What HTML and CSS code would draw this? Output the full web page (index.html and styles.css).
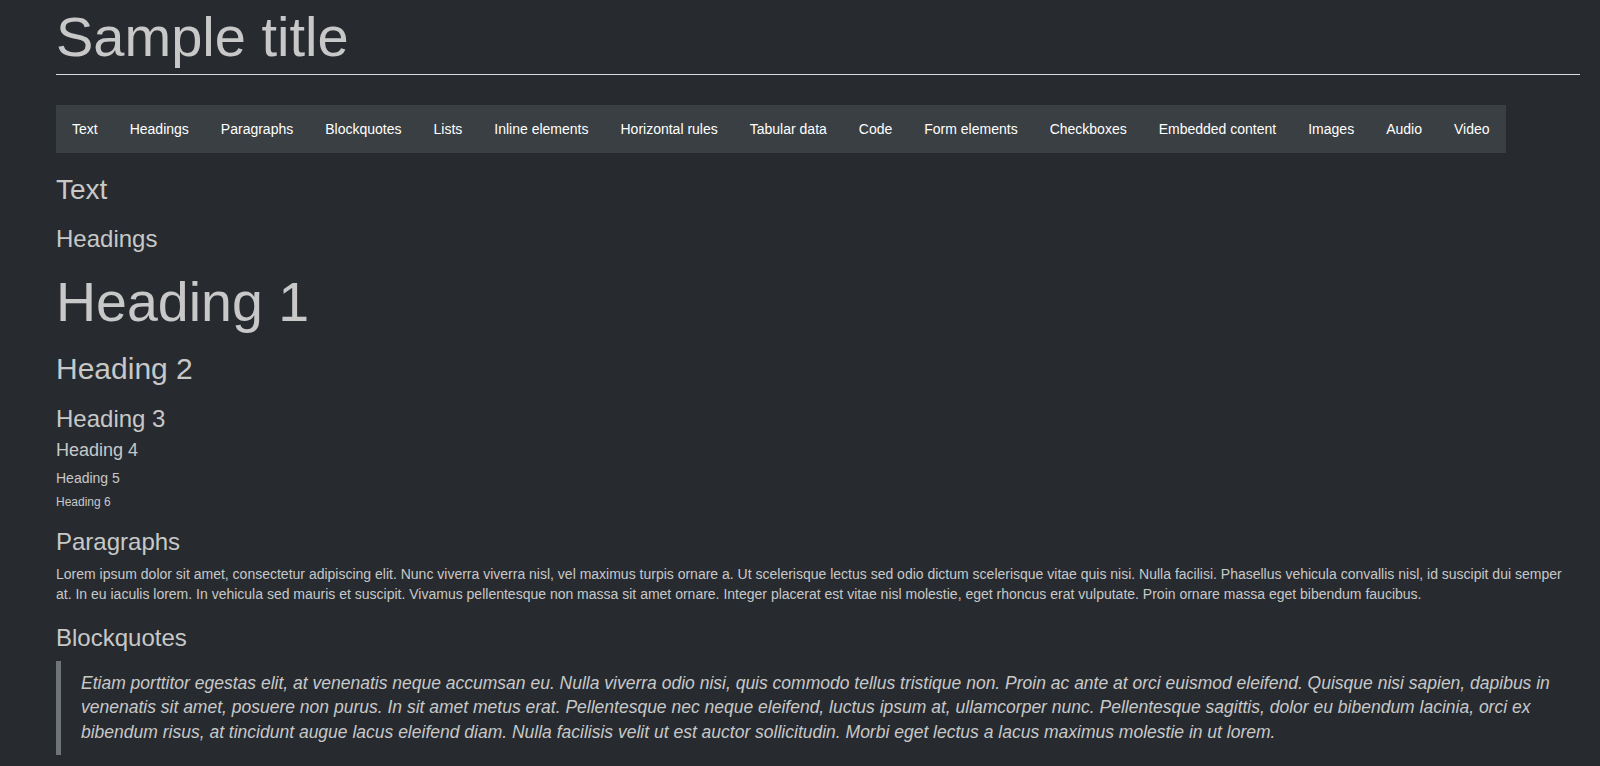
FILE: index.html
```html
<!DOCTYPE html>
<html lang="en">
<head>
<meta charset="utf-8">
<title>Sample title</title>
<link rel="stylesheet" href="styles.css">
</head>
<body>
<div class="page">
  <header class="header">
    <h1 class="title">Sample title</h1>
  </header>
  <nav class="nav">
    <a class="nav-item" href="#text">Text</a>
    <a class="nav-item" href="#headings">Headings</a>
    <a class="nav-item" href="#paragraphs">Paragraphs</a>
    <a class="nav-item" href="#blockquotes">Blockquotes</a>
    <a class="nav-item" href="#lists">Lists</a>
    <a class="nav-item" href="#inline">Inline elements</a>
    <a class="nav-item" href="#hr">Horizontal rules</a>
    <a class="nav-item" href="#tables">Tabular data</a>
    <a class="nav-item" href="#code">Code</a>
    <a class="nav-item" href="#forms">Form elements</a>
    <a class="nav-item" href="#checkboxes">Checkboxes</a>
    <a class="nav-item" href="#embedded">Embedded content</a>
    <a class="nav-item" href="#images">Images</a>
    <a class="nav-item" href="#audio">Audio</a>
    <a class="nav-item" href="#video">Video</a>
  </nav>
  <main class="main">
    <h2 class="section-title" id="text">Text</h2>
    <h3 class="sub-title" id="headings">Headings</h3>
    <h1 class="h h1">Heading 1</h1>
    <h2 class="h h2">Heading 2</h2>
    <h3 class="h h3">Heading 3</h3>
    <h4 class="h h4">Heading 4</h4>
    <h5 class="h h5">Heading 5</h5>
    <h6 class="h h6">Heading 6</h6>
    <h3 class="sub-title sub-para" id="paragraphs">Paragraphs</h3>
    <p class="para">Lorem ipsum dolor sit amet, consectetur adipiscing elit. Nunc viverra viverra nisl, vel maximus turpis ornare a. Ut scelerisque lectus sed odio dictum scelerisque vitae quis nisi. Nulla facilisi. Phasellus vehicula convallis nisl, id suscipit dui semper at. In eu iaculis lorem. In vehicula sed mauris et suscipit. Vivamus pellentesque non massa sit amet ornare. Integer placerat est vitae nisl molestie, eget rhoncus erat vulputate. Proin ornare massa eget bibendum faucibus.</p>
    <h3 class="sub-title sub-quote" id="blockquotes">Blockquotes</h3>
    <blockquote class="quote">Etiam porttitor egestas elit, at venenatis neque accumsan eu. Nulla viverra odio nisi, quis commodo tellus tristique non. Proin ac ante at orci euismod eleifend. Quisque nisi sapien, dapibus in venenatis sit amet, posuere non purus. In sit amet metus erat. Pellentesque nec neque eleifend, luctus ipsum at, ullamcorper nunc. Pellentesque sagittis, dolor eu bibendum lacinia, orci ex bibendum risus, at tincidunt augue lacus eleifend diam. Nulla facilisis velit ut est auctor sollicitudin. Morbi eget lectus a lacus maximus molestie in ut lorem.</blockquote>
  </main>
</div>
</body>
</html>
```

FILE: styles.css
```css
html, body {
  margin: 0;
  padding: 0;
  background: #272b30;
}

body {
  font-family: "Liberation Sans", Arial, Helvetica, sans-serif;
  color: #c8c8c8;
  overflow: hidden;
}

.page {
  padding: 3px 20px 0 56px;
}

.title {
  margin: 0;
  font-size: 56px;
  line-height: 67px;
  font-weight: 400;
  color: #c8c8c8;
  padding-bottom: 4px;
  border-bottom: 1px solid #dcdcdc;
}

.nav {
  display: flex;
  width: fit-content;
  margin-top: 30px;
  background: #3a3f44;
  height: 48px;
  align-items: center;
}

.nav-item {
  padding: 0 16px;
  font-size: 14px;
  line-height: 48px;
  color: #ffffff;
  text-decoration: none;
  white-space: nowrap;
}

.main h1, .main h2, .main h3, .main h4, .main h5, .main h6 {
  font-weight: 400;
  margin: 0;
  color: #c8c8c8;
}

.section-title {
  font-size: 28px;
  line-height: 34px;
  margin-top: 20.3px !important;
}

.sub-title {
  font-size: 24px;
  line-height: 29px;
  margin-top: 17.2px !important;
}

.h1 { font-size: 55.5px; line-height: 67px; margin-top: 15.3px !important; }
.h2 { font-size: 30px; line-height: 36px; margin-top: 15.1px !important; }
.h3 { font-size: 24px; line-height: 29px; margin-top: 17px !important; }
.h4 { font-size: 18px; line-height: 22px; margin-top: 6.6px !important; }
.h5 { font-size: 14px; line-height: 17px; margin-top: 8.5px !important; }
.h6 { font-size: 12px; line-height: 14px; margin-top: 7.8px !important; }

.sub-para { margin-top: 18.4px !important; }
.sub-quote { margin-top: 18.6px !important; }

.para {
  margin: 9.2px 0 0;
  font-size: 14px;
  line-height: 19.5px;
  color: #c8c8c8;
}

.quote {
  margin: 8.8px 0 0;
  padding: 10px 20px;
  border-left: 5px solid #6f7479;
  font-style: italic;
  font-size: 17.5px;
  line-height: 24.6px;
  color: #c8c8c8;
}
```
